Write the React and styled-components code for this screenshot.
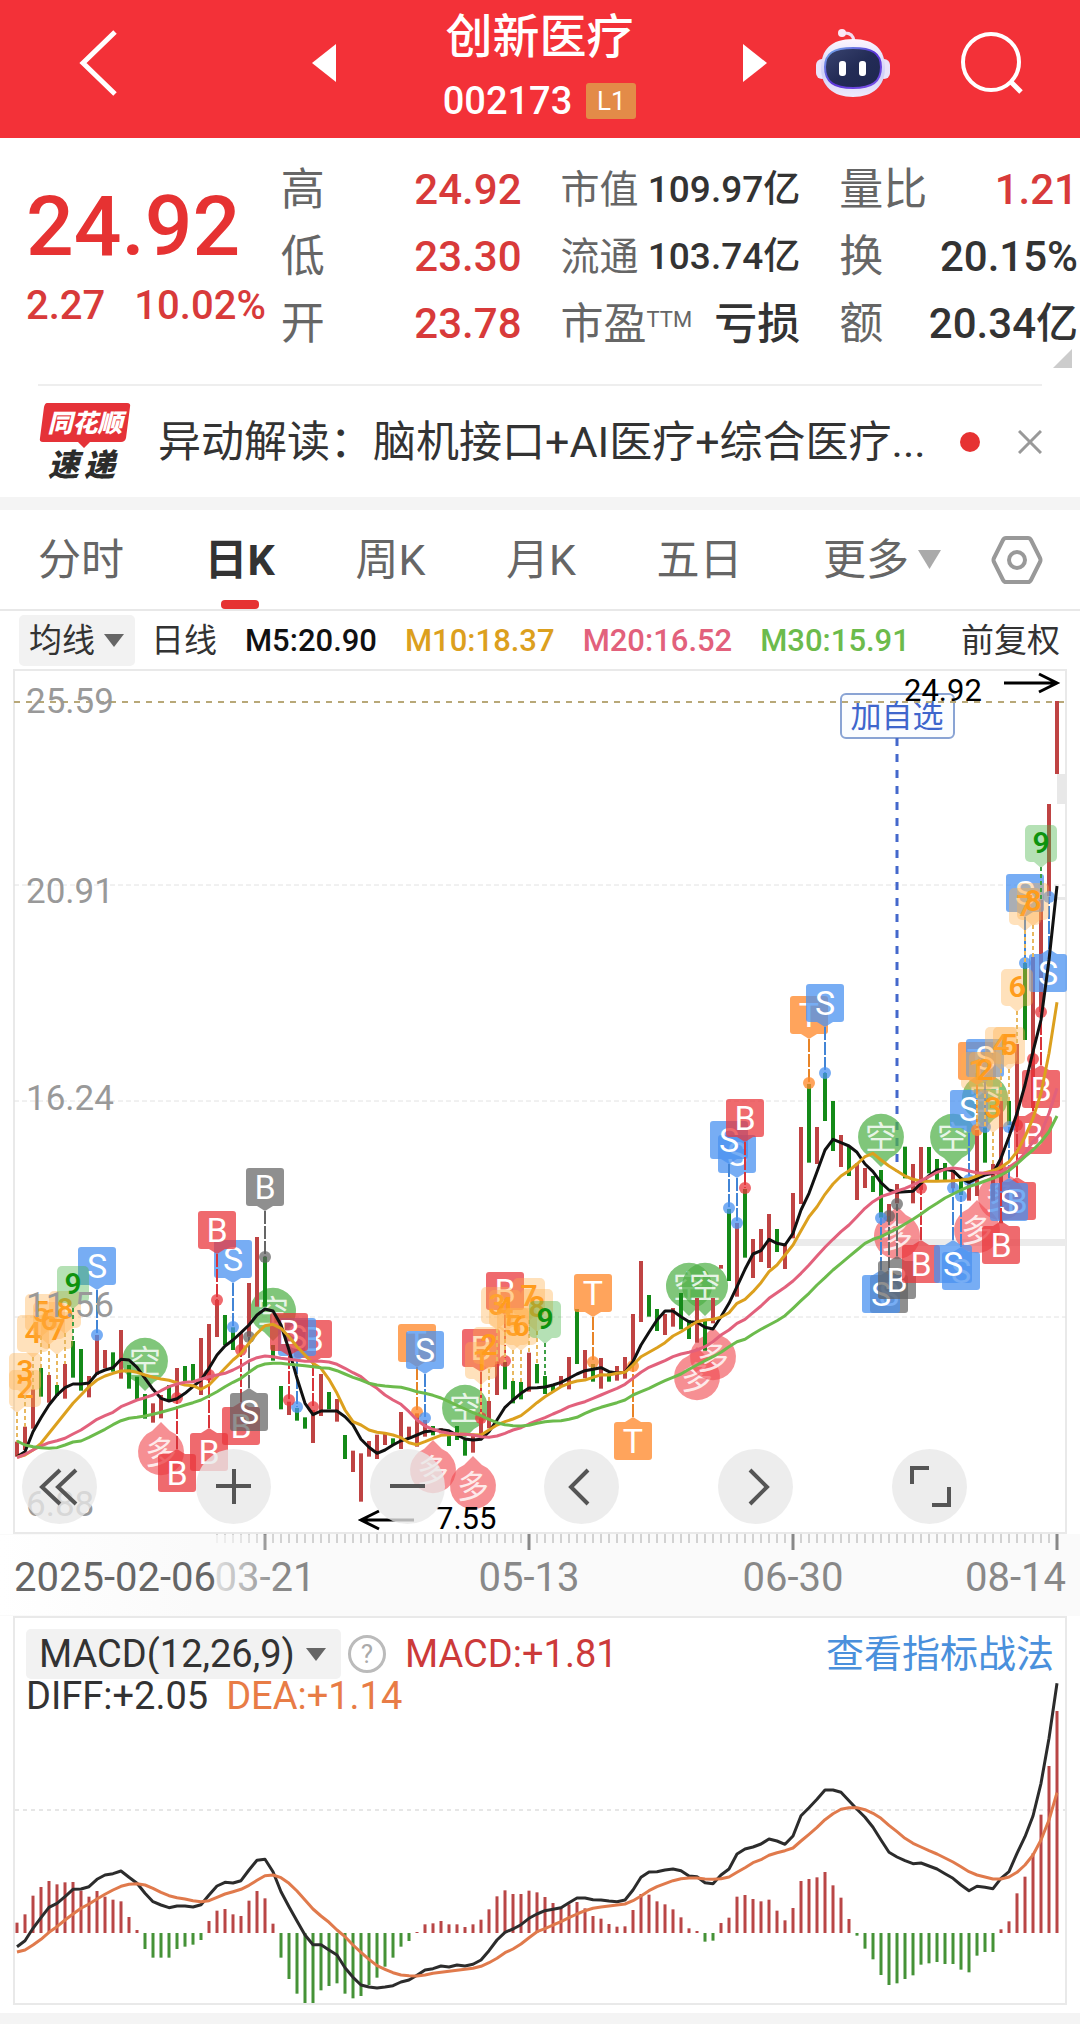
import React from "react";
import styled, { createGlobalStyle } from "styled-components";

const GlobalStyle = createGlobalStyle`
  * { box-sizing: border-box; }
  body {
    margin: 0;
    background: #f4f4f4;
    color: #333;
    font-family: Roboto, "Noto Sans CJK SC", sans-serif;
  }
  button, select {
    margin: 0;
    padding: 0;
    border: 0;
    background: none;
    color: inherit;
    font: inherit;
    cursor: pointer;
  }
  svg { display: block; flex: none; }
`;

const Page = styled.main`
  background: #fff;
  padding-bottom: 8px;
`;

/* ---------- header ---------- */

const Header = styled.header`
  display: grid;
  grid-template-columns: 336fr 407fr 337fr;
  align-items: center;
  height: 138px;
  padding-bottom: 12px;
  background: #f33138;
  color: #fff;
`;

const HeaderLeft = styled.div`
  display: flex;
  align-items: center;
  justify-content: space-between;
  padding-left: 79px;
`;

const HeaderCenter = styled.div`
  display: flex;
  flex-direction: column;
  align-items: center;
  gap: 18px;
  padding-top: 2px;
`;

const HeaderRight = styled.div`
  display: flex;
  align-items: center;
  padding-right: 57px;
`;

const RobotButton = styled.button`
  margin: 0 auto 0 48px;
`;

const StockName = styled.h1`
  margin: 0;
  font-size: 47px;
  line-height: 56px;
  font-weight: 500;
`;

const CodeRow = styled.div`
  display: flex;
  align-items: center;
  gap: 14px;
  font-size: 38px;
  line-height: 36px;
  font-weight: 500;
`;

const LevelBadge = styled.span`
  width: 50px;
  border-radius: 3px;
  background: #e38b48;
  font-size: 26px;
  font-weight: 400;
  text-align: center;
`;

/* ---------- quote ---------- */

const Quote = styled.section`
  position: relative;
  display: grid;
  grid-template-columns: minmax(0, 216fr) 241fr 240fr 239fr;
  column-gap: 39px;
  padding: 17px 2px 28px 26px;
  line-height: 44px;
`;

const PriceBlock = styled.div`
  padding-top: 32px;
  color: #e63232;
  white-space: nowrap;
`;

const Price = styled.div`
  font-size: 84px;
  line-height: 80px;
  font-weight: 500;
`;

const Change = styled.div`
  display: flex;
  gap: 29px;
  padding-top: 11px;
  font-size: 40px;
  line-height: 56px;
  font-weight: 500;
  color: #d83a3a;
`;

const Column = styled.dl`
  margin: 0;
`;

const Pair = styled.div`
  display: flex;
  align-items: center;
  justify-content: space-between;
  height: 67px;
  padding-top: 2px;
  white-space: nowrap;
`;

const Term = styled.dt`
  font-size: ${(p) => p.$size}px;
  color: #666;
  sup {
    font-size: 22px;
    line-height: 1;
    vertical-align: 12px;
  }
`;

const Value = styled.dd`
  margin: 0;
  font-size: ${(p) => p.$size}px;
  font-weight: 500;
  color: ${(p) => (p.$up ? "#d83a3a" : "#333")};
`;

const Corner = styled.svg`
  position: absolute;
  right: 8px;
  bottom: 16px;
`;

/* ---------- news ---------- */

const News = styled.section`
  display: flex;
  align-items: center;
  height: 113px;
  margin: 0 38px;
  border-top: 2px solid #eee;
`;

const NewsLink = styled.a`
  flex: 1;
  min-width: 0;
  overflow: hidden;
  margin-left: 26px;
  color: #333;
  font-size: 43px;
  line-height: 56px;
  text-decoration: none;
  white-space: nowrap;
`;

const Dot = styled.span`
  width: 20px;
  height: 20px;
  margin: 0 38px 0 24px;
  border-radius: 50%;
  background: #e63232;
`;

const Band = styled.div`
  height: 13px;
  background: #f4f4f4;
`;

/* ---------- tabs ---------- */

const Tabs = styled.nav`
  display: flex;
  align-items: center;
  justify-content: space-between;
  height: 101px;
  padding: 0 37px 0 38px;
  border-bottom: 2px solid #e8e8e8;
  color: #666;
  font-size: 43px;
  line-height: 56px;
`;

const TabGroup = styled.div`
  display: flex;
  align-items: center;
  justify-content: space-between;
  flex: 1;
  margin-right: 50px;
`;

const Tab = styled.button`
  position: relative;
  height: 99px;
  color: ${(p) => (p.$active ? "#333" : "#666")};
  font-weight: ${(p) => (p.$active ? 700 : 400)};
  &::after {
    content: "";
    display: ${(p) => (p.$active ? "block" : "none")};
    position: absolute;
    left: calc(50% - 19px);
    bottom: 0;
    width: 38px;
    height: 9px;
    border-radius: 4px;
    background: #e63232;
  }
`;

const Picker = styled.label`
  display: inline-flex;
  align-items: center;
  position: relative;
  height: ${(p) => p.$height}px;
  border-radius: 5px;
  background: ${(p) => (p.$filled ? "#f2f2f2" : "transparent")};
  select {
    appearance: none;
    height: 100%;
    padding: 0 ${(p) => p.$end}px 0 ${(p) => p.$start}px;
  }
  svg {
    position: absolute;
    right: ${(p) => p.$arrow}px;
    pointer-events: none;
  }
`;

/* ---------- averages ---------- */

const Averages = styled.div`
  display: flex;
  align-items: center;
  gap: 28px;
  height: 57px;
  padding: 2px 20px 0 19px;
  font-size: 31px;
  line-height: 36px;
  white-space: nowrap;
`;

const PlainLabel = styled.span`
  font-size: 33px;
  margin-left: ${(p) => (p.$push ? "auto" : "-12px")};
`;

const Average = styled.span`
  color: ${(p) => p.$color};
  font-weight: 500;
`;

const SmallPicker = styled(Picker)`
  font-size: 33px;
`;

/* ---------- charts ---------- */

const ChartArea = styled.section`
  position: relative;
  svg.plot { width: 100%; height: auto; }
`;

const Controls = styled.div`
  position: absolute;
  left: 2%;
  right: 10.5%;
  top: 82.4%;
  display: flex;
  justify-content: space-between;
`;

const RoundButton = styled.button`
  display: grid;
  place-items: center;
  width: 75px;
  height: 75px;
  border-radius: 50%;
  background: rgba(232, 232, 232, 0.78);
`;

const Indicator = styled.section`
  margin: 0 13px;
  border: 2px solid #e9e9e9;
  background: #fff;
  font-size: 38px;
  line-height: 40px;
`;

const IndicatorHead = styled.div`
  display: flex;
  align-items: center;
  height: 62px;
  padding: 10px 11px 0;
`;

const HelpButton = styled.button`
  width: 38px;
  height: 38px;
  margin: 0 19px 0 7px;
  border: 3px solid #bbb;
  border-radius: 50%;
  color: #aaa;
  font-size: 26px;
  line-height: 32px;
`;

const Reading = styled.span`
  color: ${(p) => p.$color};
`;

const Guide = styled.a`
  margin-left: auto;
  color: #4a90dc;
  text-decoration: none;
`;

const IndicatorPlot = styled.div`
  position: relative;
  svg { width: 100%; height: auto; }
`;

const Legend = styled.div`
  position: absolute;
  left: 11px;
  top: 0;
  display: flex;
  gap: 18px;
  line-height: 32px;
`;

/* ---------- series data: three units to a pixel ---------- */

const UP = "#bf4343";
const DOWN = "#148a18";
const barX = (i) => 17 + i * 8;

const parse = (text, base, start = 0) =>
  text.trim().split(/\s+/).map((v, k) => ({ i: start + k, y: base + Number(v) / 3 }));

const CANDLES_A = `r965-1010 r920-990 r808-926 g744-830 r765-848 g795-828 r732-836 g663-773 g687-812 r768-832
r645-765 r690-745 g697-755 r630-776 g735-806 g770-838 g822-896 r850-908 r825-895 g795-845
r744-840 g738-783 g732-785 r654-825 r612-780 r540-651 g585-675 g622-690 r640-700 r489-650
r351-560 g410-560 g675-722 g798-868 r845-885 g864-902 g892-926 r870-969 r762-888 g816-868
r837-905 g945-1017 r992-1056 r1000-1145 r963-1010 r944-1017 r940-975 g955-975 r876-987 r920-955
r880-980 r900-950 g918-946 r925-940 g930-978 g918-960 g960-1007 r945-998 r895-945 r843-925
r725-825 g726-808 g783-850 g786-838 r698-815 g732-790 g768-822 g795-815 r768-800 r711-808
g567-732 r690-775 g732-785 r714-806 g760-785 r738-782 r711-776 r582-730 r423-606 g525-590
g567-633 r582-645 r564-620 g519-628 g600-657 r534-668 g600-692 r534-610 r435-446 g267-483 r309-530`;
const CANDLES_B = `g687-893 r837-954 r807-906 r762-924 g807-876 r855-927 r699-835 r501-732 g372-608
r501-612 g339-483 g423-573 r525-621 g560-648 r610-720 r624-684 g648-696 g630-773 r732-785
r672-730 g560-655 r612-730 r561-690 g561-640 g597-660 g609-660 r630-685 g660-705 r660-722
r510-708 g501-608 r612-722 r423-790 g423-495 r252-500 g9-240`;

const parseCandles = (text, base, start) =>
  text.trim().split(/\s+/).map((t, k) => {
    const [a, b] = t.slice(1).split("-").map(Number);
    return { i: start + k, up: t[0] === "r", y1: base + a / 3, y2: base + b / 3 };
  });

const CANDLES = [
  ...parseCandles(CANDLES_A, 1120, 0),
  ...parseCandles(CANDLES_B, 960, 91),
  { i: 127, up: true, y1: 957, y2: 1108 },
  { i: 128, up: true, y1: 900, y2: 1012 },
  { i: 129, up: true, y1: 804, y2: 896 },
  { i: 130, up: true, y1: 701, y2: 774 },
];

const AVERAGE_LINES = [
  {
    color: "#111",
    a: `1010 995 935 893 855 825 803 792 792 789 760 750 743 718 720 742 775 808 835 843 836 820 800 780 745 705 678 660 638 615 585 567 573 615 690 775 850 884 873 873 873 890 915 958
    982 1000 990 975 962 955 945 935 932 929 932 945 957 960 958 935 900 862 840 820 804 803 801 795 787 775 762 752 748 743 755 759 757 725 675 637 600 573 573 590 605 607 622 627 590 550 500`,
    b: `928 882 872 838 850 855 820 750 700 635 570 538 548 558 577 612 635 668 690 697 695 694 670 647 630 628 632 655 667 655 645 640 595 530 460 375 275 180 0 -222`,
  },
  {
    color: "#dca01e",
    a: `1012 1005 990 970 940 910 880 850 825 800 780 768 760 753 752 757 765 772 777 781 788 795 797 808 795 770 745 720 700 670 640 617 613 625 650 680 705 730 745 778 820 870 905 915
    930 937 940 945 953 968 974 965 955 946 944 942 943 944 945 930 915 905 897 887 868 848 830 815 800 790 783 780 772 764 765 760 757 735 710 697 683 668 648 635 620 605 600 598 592 578 550`,
    b: `1018 995 968 935 915 885 855 812 770 740 703 672 648 632 612 590 580 600 618 633 648 658 664 664 664 663 662 660 657 648 638 632 622 605 575 530 475 400 280 127`,
  },
  {
    color: "#e2617c",
    a: `1013 1003 990 978 968 962 955 942 930 914 898 887 877 860 850 840 833 825 812 800 792 787 785 778 770 765 760 750 738 723 713 708 710 715 718 721 724 724 724 726 733 745 758 770
    790 805 825 840 853 875 900 918 928 935 940 942 943 945 950 952 948 940 930 923 912 902 893 882 872 860 852 845 835 825 815 805 793 775 757 742 732 722 710 702 697 690 680 665 645 630 610`,
    b: `1078 1058 1038 1015 998 982 963 940 915 888 862 838 815 795 770 745 725 710 702 693 685 675 662 650 637 628 624 627 633 638 640 638 636 622 605 580 545 520 460 385`,
  },
  {
    color: "#6cbb4c",
    a: `963 975 980 983 985 983 975 966 963 952 940 928 914 902 895 892 888 883 877 870 863 855 848 840 828 815 800 787 775 757 740 732 730 730 733 735 737 740 743 745 752 762 772 780
    790 795 798 800 802 808 815 820 826 834 845 856 867 878 887 898 908 914 917 918 916 910 905 903 902 898 892 880 870 862 855 848 840 825 815 805 793 782 772 762 748 735 722 710 697 680 665`,
    b: `1138 1122 1108 1095 1082 1067 1045 1022 1000 975 953 930 910 890 870 850 838 830 818 806 792 778 762 745 730 714 702 690 680 672 663 655 645 632 612 590 570 545 515 468`,
  },
];

const DIFF_A = `740 722 685 653 622 610 590 568 567 560 538 525 521 513 532 550 580 605 615 623 618 618 621 614 585 558 547 549 542 510 481 478 515 575 620 663 705 734 734 750 765 803 832 855 861 864 861 857 846 840 826 810 806 798 801 795 798 793 780 752 720 697 687 674 655 642`;
const DIFF_B = `752 748 743 728 714 714 719 720 723 725 720 690 652 636 635 630 627 632 648 650 668 671 645 627 582 567 561 552 537 543 553 528 467 443 418 390 390 397 422 448 472 502 540 577 591 602 611 609 618 627 641 655 675 692 679 682 686 655 635 580 530 468 370 235 70`;
const DEA_A = `756 750 735 718 697 680 660 642 625 612 597 583 570 559 553 551 555 565 577 587 593 597 602 605 602 592 582 575 568 556 541 527 525 533 550 573 600 627 648 667 690 710 735 757 778 797 808 818 825 827 828 825 820 817 814 811 808 805 799 788 775 758 747 732 713 695`;
const DEA_B = `806 795 785 773 762 752 745 741 738 735 732 722 708 692 680 671 662 656 654 654 657 658 656 651 637 623 608 599 586 578 572 564 543 523 502 479 461 448 443 443 449 460 475 496 515 535 550 561 572 582 594 606 620 635 645 651 657 657 651 637 615 585 540 480 398`;
const BARS_A = `668 643 587 561 543 553 547 546 572 590 573 590 599 604 651 690 747 773 773 773 747 740 734 720 663 632 627 643 648 602 573 595 671 773 837 881 912 912 871 858 850 881 895 888 855 833 800 773 740 723 696 673 670 663 673 673 681 673 659 628 589 571 582 582 572 577`;
const BARS_B = `711 729 740 733 726 745 768 776 792 800 799 750 702 704 724 733 748 772 805 813 845 842 789 773 710 705 717 724 719 752 781 744 663 657 652 636 676 713 777 827 866 898 945 975 970 957 946 914 910 906 912 912 929 937 887 876 876 808 784 700 650 580 464 318 153`;

const series = (a, b) => [...parse(a, 1700), ...parse(b, 1660, 66)];
const toPoints = (list) => list.map((p) => `${barX(p.i)},${p.y.toFixed(1)}`).join(" ");

/* ---------- trade flags ---------- */

const FLAG = {
  r: { fill: "rgba(234,54,60,.74)", line: "#d8343a" },
  b: { fill: "rgba(74,146,240,.75)", line: "#4285d6" },
  k: { fill: "rgba(96,96,96,.7)", line: "#666" },
  o: { fill: "rgba(255,138,46,.78)", line: "#e88427" },
};

// [bar, letter, colour, top of the flag, y of the dot]
const FLAGS = [
  [10, "S", "b", 1247, 1335], [27, "S", "b", 1240, 1327], [25, "B", "r", 1211, 1300], [31, "B", "k", 1168, 1257],
  [37, "B", "r", 1320, 1407], [35, "S", "b", 1318, 1407], [34, "B", "r", 1313, 1400],
  [20, "B", "r", 1454, 1398], [24, "B", "r", 1433, 1375], [28, "B", "r", 1407, 1350], [29, "S", "k", 1393, 1337],
  [50, "T", "o", 1324, 1412], [51, "S", "b", 1331, 1418], [58, "B", "r", 1329, 1418], [61, "B", "r", 1272, 1361],
  [72, "T", "o", 1274, 1362], [77, "T", "o", 1422, 1366],
  [90, "S", "b", 1135, 1223], [89, "S", "b", 1121, 1208], [91, "B", "r", 1099, 1188],
  [99, "T", "o", 996, 1083], [101, "S", "b", 984, 1073],
  [109, "S", "k", 1275, 1216], [108, "S", "b", 1275, 1218], [110, "B", "k", 1261, 1204], [113, "B", "r", 1245, 1188],
  [118, "S", "b", 1252, 1196], [117, "S", "b", 1245, 1188],
  [119, "S", "b", 1090, 1180], [120, "T", "o", 1042, 1130], [121, "S", "b", 1039, 1127],
  [126, "S", "b", 874, 963], [129, "S", "b", 954, 897], [127, "B", "r", 1116, 1059], [128, "B", "r", 1070, 1012],
  [125, "B", "r", 1182, 1125], [124, "S", "b", 1183, 1127], [123, "B", "r", 1226, 1170],
];

// [bar, digit, top of the tag, end of the thread]
const COUNTS = [
  [0, 2, 1370, 1442], [1, 3, 1353, 1427], [2, 4, 1315, 1389], [3, 5, 1294, 1368], [4, 6, 1302, 1375],
  [5, 7, 1312, 1385], [6, 8, 1291, 1364], [7, 9, 1266, 1341],
  [58, 1, 1342, 1418], [59, 2, 1327, 1401], [60, 3, 1287, 1362], [61, 4, 1290, 1362], [62, 5, 1308, 1381],
  [63, 6, 1308, 1382], [64, 7, 1278, 1353], [65, 8, 1289, 1364], [66, 9, 1301, 1376],
  [120, 1, 1052, 1130], [121, 2, 1052, 1127], [122, 3, 1090, 1164], [123, 4, 1027, 1101], [124, 5, 1027, 1101],
  [125, 6, 969, 1044], [126, 7, 888, 963], [127, 8, 883, 957], [128, 9, 825, 900],
];

// [bar, sign, centre y]
const SIGNS = [
  [16, "空", 1361], [32, "空", 1311], [18, "多", 1452], [56, "空", 1408], [84, "空", 1286], [86, "空", 1286],
  [52, "多", 1470], [57, "多", 1486], [85, "多", 1377], [87, "多", 1357], [108, "空", 1137], [117, "空", 1137],
  [121, "空", 1098], [110, "多", 1236], [120, "多", 1230], [123, "多", 1197],
];

function Sign({ bar, sign, y }) {
  const x = barX(bar);
  const bear = sign === "空";
  const d = bear ? 1 : -1;
  return (
    <g>
      <path
        d={`M${x - 9} ${y + d * 21} A23 23 0 1 ${bear ? 1 : 0} ${x + 9} ${y + d * 21} L${x} ${y + d * 30} Z`}
        fill={bear ? "#4fb046" : "#f04a50"}
        fillOpacity={bear ? 0.72 : 0.62}
      />
      <text x={x} y={y + 12} fontSize="32" textAnchor="middle" fill="#fff" fillOpacity=".82">{sign}</text>
    </g>
  );
}

function Flag({ bar, letter, tone, top, dot }) {
  const x = barX(bar);
  const { fill, line } = FLAG[tone];
  const above = dot > top;
  const tip = above ? top + 43 : top - 5;
  const edge = above ? top + 38 : top;
  const tx = Math.min(x, 1048);
  return (
    <g>
      <line x1={x} x2={x} y1={tip} y2={dot} stroke={line} strokeWidth="2" strokeDasharray="13 2" />
      <circle cx={x} cy={dot} r="6" fill={fill} />
      <rect x={tx - 19} y={top} width="38" height="38" rx="3" fill={fill} />
      <path d={`M${x - 8} ${edge} L${x} ${tip} L${x + 8} ${edge} Z`} fill={fill} />
      <text x={tx} y={top + 31} fontSize="34" textAnchor="middle" fill="#fff">{letter}</text>
    </g>
  );
}

function Count({ bar, digit, top, end }) {
  const x = barX(bar);
  const last = digit === 9;
  const tx = Math.max(x, 25);
  const fill = last ? "rgba(70,180,70,.4)" : "rgba(255,176,76,.38)";
  return (
    <g>
      <line x1={x} x2={x} y1={top + 42} y2={end} stroke={last ? "#3fa047" : "#e8b860"} strokeWidth="2" strokeDasharray="4 3" />
      <rect x={tx - 16} y={top} width="32" height="37" rx="5" fill={fill} />
      <path d={`M${x - 7} ${top + 37} L${x} ${top + 43} L${x + 7} ${top + 37} Z`} fill={fill} />
      <text x={tx} y={top + 28} fontSize="30" fontWeight="600" textAnchor="middle" fill={last ? "#0e930e" : "#ff9c1c"}>
        {digit}
      </text>
    </g>
  );
}

const GRID = [885, 1101, 1317];
const PRICE_LABELS = [[25.59, 701], [20.91, 891], [16.24, 1098], [11.56, 1305], [6.88, 1504]];
const DATE_LABELS = [[265, "03-21", "middle"], [529, "05-13", "middle"], [793, "06-30", "middle"], [1066, "08-14", "end"]];

function PriceChart() {
  const ticks = Array.from({ length: 106 }, (_, k) => k + 25);
  return (
    <svg className="plot" viewBox="0 668 1080 948" role="img" aria-label="日K">
      <defs>
        <linearGradient id="fade" x1="0" x2="1" y1="0" y2="0">
          <stop offset="0" stopColor="#fff" />
          <stop offset=".7" stopColor="#fafafa" />
          <stop offset="1" stopColor="#fafafa" stopOpacity="0" />
        </linearGradient>
      </defs>
      <rect x="0" y="1534" width="1080" height="82" fill="#fafafa" />
      <rect x="14" y="670" width="1052" height="863" fill="#fff" stroke="#e9e9e9" strokeWidth="2" />
      {GRID.map((y) => (
        <line key={y} x1="14" x2="1066" y1={y} y2={y} stroke="#e2e2e2" strokeDasharray="5 3" />
      ))}
      <rect x="793" y="1239" width="273" height="7" fill="#ebebeb" />
      <rect x="1057" y="774" width="9" height="30" fill="#e8e8e8" />
      <rect x="1057" y="897" width="9" height="3" fill="#e8e8e8" />

      <rect x="841" y="694" width="113" height="44" rx="5" fill="#fbfdff" stroke="#8aa4d4" strokeWidth="2" />
      <text x="897" y="727" fontSize="31" textAnchor="middle" fill="#3f66cc">加自选</text>
      <line x1="897" x2="897" y1="738" y2="1172" stroke="#4468cc" strokeWidth="3" strokeDasharray="8 8" />
      <line x1="14" x2="1066" y1="702" y2="702" stroke="#b8a878" strokeWidth="2" strokeDasharray="6 6" />

      {SIGNS.map(([bar, sign, y]) => <Sign key={`${bar}${sign}`} bar={bar} sign={sign} y={y} />)}
      {CANDLES.map((c) => (
        <rect key={c.i} x={barX(c.i) - 2} y={c.y1} width="4" height={c.y2 - c.y1} fill={c.up ? UP : DOWN} />
      ))}
      {FLAGS.map(([bar, letter, tone, top, dot]) => (
        <Flag key={bar} bar={bar} letter={letter} tone={tone} top={top} dot={dot} />
      ))}
      {COUNTS.map(([bar, digit, top, end]) => (
        <Count key={bar} bar={bar} digit={digit} top={top} end={end} />
      ))}
      {AVERAGE_LINES.map((l) => (
        <polyline
          key={l.color}
          points={toPoints([...parse(l.a, 1120), ...parse(l.b, 960, 91)])}
          fill="none"
          stroke={l.color}
          strokeWidth="3"
          strokeLinejoin="round"
        />
      ))}

      <g fontSize="35" fill="#999">
        {PRICE_LABELS.map(([v, y]) => (
          <text key={v} x="26" y={y + 12}>{v}</text>
        ))}
      </g>

      <g fontSize="31" fill="#000">
        <text x="904" y="701">24.92</text>
        <text x="436" y="1529">7.55</text>
      </g>
      <g fill="none" stroke="#000" strokeWidth="3">
        <path d="M1004 683 H1056 M1039 674 L1057 683 L1039 692" />
        <path d="M414 1520 H363 M379 1511 L361 1520 L379 1529" />
      </g>

      {ticks.map((i) => {
        const major = i % 33 === 31 || i === 130;
        return (
          <line
            key={i}
            x1={barX(i)} x2={barX(i)} y1="1534" y2={major ? 1550 : 1543}
            stroke={major ? "#888" : "#aaa"} strokeWidth={major ? 3 : 1}
          />
        );
      })}
      <g fontSize="40" fill="#888">
        {DATE_LABELS.map(([x, label, anchor]) => (
          <text key={label} x={x} y="1591" textAnchor={anchor}>{label}</text>
        ))}
      </g>
      <rect x="0" y="1535" width="280" height="80" fill="url(#fade)" />
      <text x="14" y="1591" fontSize="40" fill="#666">2025-02-06</text>
    </svg>
  );
}

function MacdChart() {
  return (
    <svg viewBox="15 1680 1050 323" role="img" aria-label="MACD">
      <line x1="15" x2="1065" y1="1810" y2="1810" stroke="#e6e6e6" strokeWidth="2" strokeDasharray="4 4" />
      {series(BARS_A, BARS_B).map(({ i, y }) => (
        <rect
          key={i}
          x={barX(i) - 1.5}
          y={Math.min(y, 1933)}
          width="3"
          height={Math.abs(y - 1933)}
          fill={y < 1933 ? "#b94646" : "#459237"}
        />
      ))}
      <polyline points={toPoints(series(DIFF_A, DIFF_B))} fill="none" stroke="#2c2c2c" strokeWidth="3" strokeLinejoin="round" />
      <polyline points={toPoints(series(DEA_A, DEA_B))} fill="none" stroke="#e07a4c" strokeWidth="3" strokeLinejoin="round" />
    </svg>
  );
}

/* ---------- icons ---------- */

const Triangle = ({ w, h, color }) => (
  <svg width={w} height={h} viewBox="0 0 10 10" preserveAspectRatio="none" aria-hidden="true">
    <path d="M0 0 H10 L5 10 Z" fill={color} />
  </svg>
);

const Robot = () => (
  <svg width="76" height="70" viewBox="0 0 76 70" aria-hidden="true">
    <defs>
      <linearGradient id="shell" x1="0" y1="0" x2="0" y2="1">
        <stop offset="0" stopColor="#fdf6ff" />
        <stop offset=".6" stopColor="#cfd0f6" />
        <stop offset="1" stopColor="#efeafc" />
      </linearGradient>
      <linearGradient id="rim" x1="0" y1="0" x2="1" y2="1">
        <stop offset="0" stopColor="#76b6ec" />
        <stop offset=".5" stopColor="#5a35d8" />
        <stop offset="1" stopColor="#7b55e8" />
      </linearGradient>
      <linearGradient id="visor" x1="0" y1="0" x2="1" y2="1">
        <stop offset="0" stopColor="#3a4470" />
        <stop offset=".5" stopColor="#232c56" />
        <stop offset="1" stopColor="#1e2650" />
      </linearGradient>
    </defs>
    <path d="M28 5 Q38 4 39 13" fill="none" stroke="#f3dcf0" strokeWidth="3" />
    <circle cx="27" cy="5" r="4" fill="#fbe8f6" />
    <rect x="1" y="31" width="12" height="20" rx="6" fill="#e9e4fb" />
    <rect x="63" y="31" width="12" height="20" rx="6" fill="#e9e4fb" />
    <path d="M38 11 C60 11 70 22 70 40 C70 58 58 69 38 69 C18 69 6 58 6 40 C6 22 16 11 38 11 Z" fill="url(#shell)" />
    <path d="M38 20 C57 20 66 25 66 39 C66 54 57 60 38 60 C19 60 10 54 10 39 C10 25 19 20 38 20 Z" fill="url(#visor)" stroke="url(#rim)" strokeWidth="2" />
    <rect x="24" y="33" width="7" height="15" rx="3" fill="#fff" />
    <rect x="44" y="33" width="7" height="15" rx="3" fill="#fff" />
  </svg>
);

const ExpressLogo = () => (
  <svg width="94" height="80" viewBox="0 0 94 80" role="img" aria-label="同花顺速递">
    <path d="M9 1 H89 Q93 1 92 5 L88 36 Q87 40 83 40 H52 L46 46 L40 40 H5 Q1 40 2 36 L6 5 Q7 1 9 1 Z" fill="#e53238" />
    <text x="47" y="30" fontSize="25" fontWeight="900" fontStyle="italic" textAnchor="middle" fill="#fff">同花顺</text>
    <g fontSize="31" fontWeight="900" fontStyle="italic" fill="#2c2c2c">
      <text x="10" y="74">速</text>
      <text x="46" y="74">递</text>
    </g>
  </svg>
);

const CONTROL_ICONS = [
  ["最早", "M38 21 L20 38 L38 55 M54 21 L36 38 L54 55"],
  ["放大", "M20 37 H55 M38 20 V55"],
  ["缩小", "M20 37 H55"],
  ["向左", "M44 21 L27 38 L44 55"],
  ["向右", "M32 21 L49 38 L32 55"],
  ["全屏", "M20 35 V19 H37 M57 38 V56 H40"],
];

/* ---------- quote data ---------- */

const QUOTE = [
  [["高", "24.92", true, 44, 42], ["低", "23.30", true, 44, 42], ["开", "23.78", true, 44, 42]],
  [["市值", "109.97亿", false, 39, 37], ["流通", "103.74亿", false, 39, 37], ["市盈", "亏损", false, 43, 43]],
  [["量比", "1.21", true, 44, 42], ["换", "20.15%", false, 44, 42], ["额", "20.34亿", false, 44, 42]],
];

export default function App() {
  return (
    <Page>
      <GlobalStyle />
      <Header>
        <HeaderLeft>
          <button aria-label="返回">
            <svg width="40" height="68" viewBox="0 0 40 68"><path d="M36 3 L4 34 L36 65" fill="none" stroke="#fff" strokeWidth="5" /></svg>
          </button>
          <button aria-label="上一只">
            <svg width="24" height="38" viewBox="0 0 24 38"><path d="M24 0 V38 L0 19 Z" fill="#fff" /></svg>
          </button>
        </HeaderLeft>
        <HeaderCenter>
          <StockName>创新医疗</StockName>
          <CodeRow>002173<LevelBadge>L1</LevelBadge></CodeRow>
        </HeaderCenter>
        <HeaderRight>
          <button aria-label="下一只">
            <svg width="24" height="38" viewBox="0 0 24 38"><path d="M0 0 V38 L24 19 Z" fill="#fff" /></svg>
          </button>
          <RobotButton aria-label="智能助手"><Robot /></RobotButton>
          <button aria-label="搜索">
            <svg width="62" height="64" viewBox="0 0 62 64" fill="none" stroke="#fff" strokeWidth="4">
              <circle cx="30" cy="31" r="28" /><path d="M49 50 L60 61" strokeWidth="5" />
            </svg>
          </button>
        </HeaderRight>
      </Header>

      <Quote>
        <PriceBlock>
          <Price>24.92</Price>
          <Change><span>2.27</span><span>10.02%</span></Change>
        </PriceBlock>
        {QUOTE.map((column, k) => (
          <Column key={k}>
            {column.map(([term, value, up, termSize, valueSize]) => (
              <Pair key={term}>
                <Term $size={termSize}>{term}{term === "市盈" && <sup>TTM</sup>}</Term>
                <Value $size={valueSize} $up={up}>{value}</Value>
              </Pair>
            ))}
          </Column>
        ))}
        <Corner width="19" height="19" viewBox="0 0 19 19" aria-hidden="true"><path d="M19 0 V19 H0 Z" fill="#ccc" /></Corner>
      </Quote>

      <News>
        <ExpressLogo />
        <NewsLink href="#news">异动解读：脑机接口+AI医疗+综合医疗...</NewsLink>
        <Dot />
        <button aria-label="关闭">
          <svg width="24" height="24" viewBox="0 0 24 24"><path d="M1 1 L23 23 M23 1 L1 23" stroke="#999" strokeWidth="3" /></svg>
        </button>
      </News>
      <Band />

      <Tabs>
        <TabGroup>
          <Tab>分时</Tab>
          <Tab $active>日K</Tab>
          <Tab>周K</Tab>
          <Tab>月K</Tab>
          <Tab>五日</Tab>
          <Picker $height={99} $start={0} $end={32} $arrow={0}>
            <select aria-label="更多周期"><option>更多</option></select>
            <Triangle w={23} h={19} color="#aaa" />
          </Picker>
        </TabGroup>
        <button aria-label="设置">
          <svg width="52" height="48" viewBox="0 0 52 48" fill="none" stroke="#999" strokeWidth="4">
            <path d="M15 2 H37 Q39 2 40 4 L49 22 Q50 24 49 26 L40 44 Q39 46 37 46 H15 Q13 46 12 44 L3 26 Q2 24 3 22 L12 4 Q13 2 15 2 Z" />
            <circle cx="26" cy="24" r="8" />
          </svg>
        </button>
      </Tabs>

      <Averages>
        <SmallPicker $height={51} $start={10} $end={40} $arrow={11} $filled>
          <select aria-label="指标"><option>均线</option></select>
          <Triangle w={20} h={13} color="#666" />
        </SmallPicker>
        <PlainLabel>日线</PlainLabel>
        <Average $color="#111">M5:20.90</Average>
        <Average $color="#dca01e">M10:18.37</Average>
        <Average $color="#e2617c">M20:16.52</Average>
        <Average $color="#6cbb4c">M30:15.91</Average>
        <PlainLabel $push>前复权</PlainLabel>
      </Averages>

      <ChartArea>
        <PriceChart />
        <Controls>
          {CONTROL_ICONS.map(([label, d]) => (
            <RoundButton key={label} aria-label={label}>
              <svg width="75" height="75" viewBox="0 0 75 75"><path d={d} fill="none" stroke="#555" strokeWidth="4" /></svg>
            </RoundButton>
          ))}
        </Controls>
      </ChartArea>

      <Indicator>
        <IndicatorHead>
          <Picker $height={50} $start={13} $end={46} $arrow={15} $filled>
            <select aria-label="副图指标"><option>MACD(12,26,9)</option></select>
            <Triangle w={20} h={13} color="#666" />
          </Picker>
          <HelpButton aria-label="说明">?</HelpButton>
          <Reading $color="#cc3a3a">MACD:+1.81</Reading>
          <Guide href="#guide">查看指标战法</Guide>
        </IndicatorHead>
        <IndicatorPlot>
          <MacdChart />
          <Legend>
            <Reading $color="#333">DIFF:+2.05</Reading>
            <Reading $color="#e87c46">DEA:+1.14</Reading>
          </Legend>
        </IndicatorPlot>
      </Indicator>
    </Page>
  );
}
